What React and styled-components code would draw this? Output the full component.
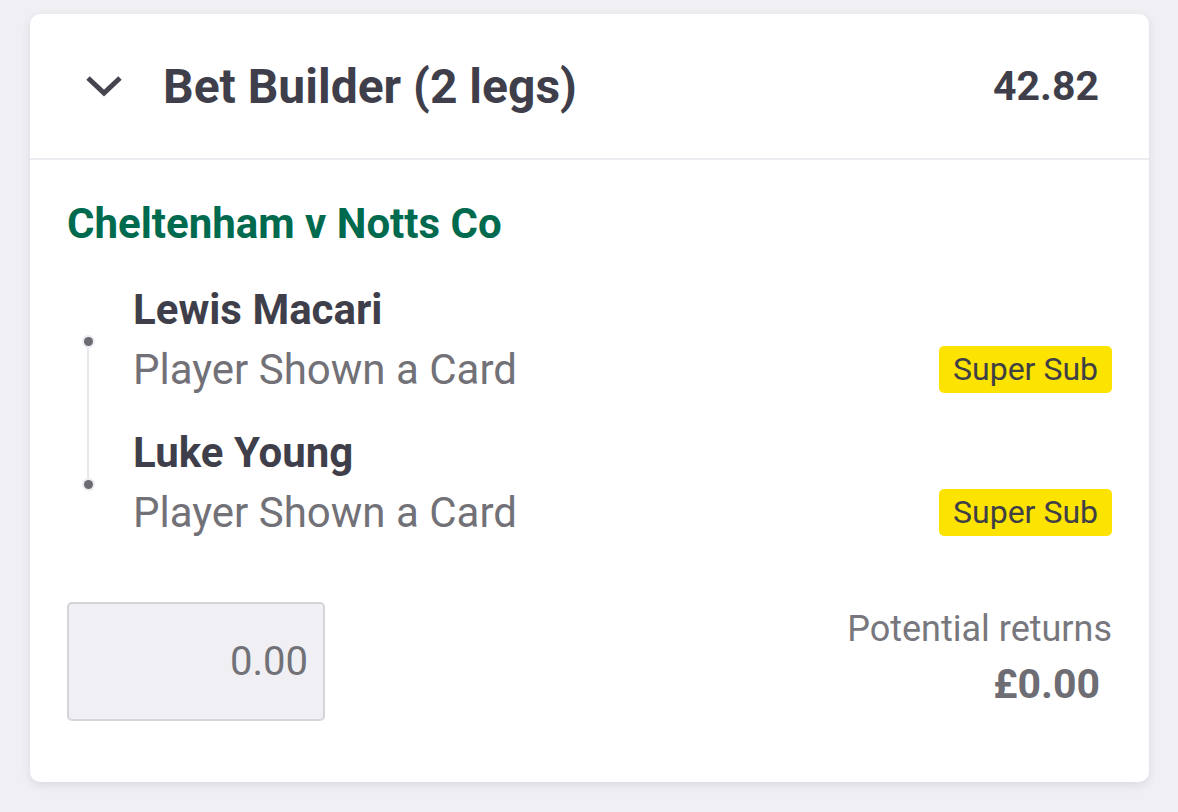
import React from 'react'
import styled, { createGlobalStyle } from 'styled-components'

const GlobalStyle = createGlobalStyle`
  body {
    margin: 0;
    background: #efeff4;
    font-family: Roboto, "Liberation Sans", Arial, sans-serif;
  }
`

const Page = styled.div`
  padding: 14px 29px 31px 30px;
`

const Card = styled.div`
  background: #fff;
  border-radius: 10px;
  box-shadow: 0 3px 10px rgba(40, 40, 60, 0.1);
`

const Header = styled.div`
  display: flex;
  align-items: center;
  height: 144px;
  padding: 0 50px 0 55px;
  border-bottom: 2px solid #ededf1;
  color: #3f3f4b;
`

const Chevron = styled.svg`
  width: 38px;
  height: 24px;
  margin-right: 40px;
  flex-shrink: 0;
`

const Title = styled.h2`
  flex: 1;
  margin: 0;
  font-size: 48px;
  font-weight: 700;
`

const Odds = styled.span`
  font-size: 41px;
  font-weight: 700;
`

const Body = styled.div`
  padding: 40px 37px 61px;
`

const EventName = styled.div`
  color: #006a4f;
  font-size: 42px;
  font-weight: 700;
  line-height: 48px;
  margin-bottom: 36px;
`

const Legs = styled.div`
  position: relative;
  display: flex;
  flex-direction: column;
  gap: 23px;

  &::before {
    content: '';
    position: absolute;
    left: 20px;
    top: 57px;
    height: 145px;
    width: 2px;
    background: #e8e8ec;
  }
`

const Leg = styled.div`
  display: grid;
  grid-template-columns: 66px 1fr auto;
  grid-template-rows: 50px 70px;
  align-items: center;
`

const Dot = styled.span`
  grid-column: 1;
  grid-row: 2;
  align-self: start;
  margin: 3px 0 0 17px;
  width: 9px;
  height: 9px;
  border-radius: 50%;
  background: #6b6b73;
  box-shadow: 0 0 0 2px #ececf0;
  position: relative;
  z-index: 1;
`

const Player = styled.div`
  grid-column: 2 / 4;
  grid-row: 1;
  color: #3f3f4b;
  font-size: 42px;
  font-weight: 700;
`

const Market = styled.div`
  grid-column: 2;
  grid-row: 2;
  color: #717177;
  font-size: 42px;
`

const Badge = styled.span`
  grid-column: 3;
  grid-row: 2;
  background: #fde300;
  color: #3f3f46;
  font-size: 32px;
  line-height: 47px;
  padding: 0 14px;
  border-radius: 5px;
`

const Footer = styled.div`
  display: flex;
  justify-content: space-between;
  align-items: center;
  margin-top: 55px;
`

const Stake = styled.div`
  box-sizing: border-box;
  width: 258px;
  height: 119px;
  background: #f0f0f4;
  border: 2px solid #d5d5d9;
  border-radius: 5px;
  display: flex;
  align-items: center;
  justify-content: flex-end;
  padding-right: 15px;
  color: #717177;
  font-size: 40px;
`

const Returns = styled.div`
  text-align: right;
  margin-top: -8px;
`

const ReturnsLabel = styled.div`
  color: #77777d;
  font-size: 36px;
  line-height: 44px;
`

const ReturnsValue = styled.div`
  color: #6d6d73;
  font-size: 41px;
  font-weight: 700;
  line-height: 50px;
  margin: 8px 12px 0 0;
`

const legs = [
  { player: 'Lewis Macari', market: 'Player Shown a Card', tag: 'Super Sub' },
  { player: 'Luke Young', market: 'Player Shown a Card', tag: 'Super Sub' },
]

export default function App() {
  return (
    <Page>
      <GlobalStyle />
      <Card>
        <Header>
          <Chevron viewBox="0 0 38 24">
            <path d="M3 4 L19 19 L35 4" fill="none" stroke="#45454f" strokeWidth="5" />
          </Chevron>
          <Title>Bet Builder (2 legs)</Title>
          <Odds>42.82</Odds>
        </Header>
        <Body>
          <EventName>Cheltenham v Notts Co</EventName>
          <Legs>
            {legs.map((leg) => (
              <Leg key={leg.player}>
                <Player>{leg.player}</Player>
                <Dot />
                <Market>{leg.market}</Market>
                <Badge>{leg.tag}</Badge>
              </Leg>
            ))}
          </Legs>
          <Footer>
            <Stake>0.00</Stake>
            <Returns>
              <ReturnsLabel>Potential returns</ReturnsLabel>
              <ReturnsValue>£0.00</ReturnsValue>
            </Returns>
          </Footer>
        </Body>
      </Card>
    </Page>
  )
}
